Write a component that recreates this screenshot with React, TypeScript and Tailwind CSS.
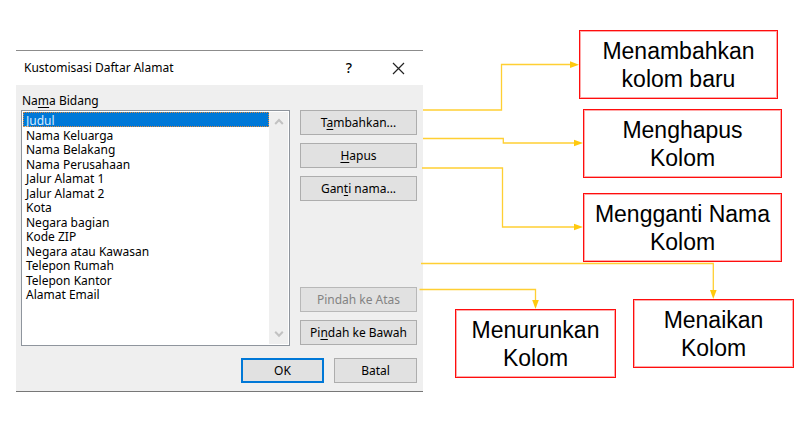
import React from "react";

const FIELDS = [
  "Judul",
  "Nama Keluarga",
  "Nama Belakang",
  "Nama Perusahaan",
  "Jalur Alamat 1",
  "Jalur Alamat 2",
  "Kota",
  "Negara bagian",
  "Kode ZIP",
  "Negara atau Kawasan",
  "Telepon Rumah",
  "Telepon Kantor",
  "Alamat Email",
];

const NOTES = [
  { lines: ["Menambahkan", "kolom baru"], place: "left-[579px] top-[30px] w-[199px]" },
  { lines: ["Menghapus", "Kolom"], place: "left-[583px] top-[109px] w-[199px]" },
  { lines: ["Mengganti Nama", "Kolom"], place: "left-[583px] top-[193px] w-[199px]" },
  { lines: ["Menurunkan", "Kolom"], place: "left-[455px] top-[309px] w-[161px]" },
  { lines: ["Menaikan", "Kolom"], place: "left-[633px] top-[299px] w-[161px]" },
];

function DialogButton({
  children,
  primary = false,
  disabled = false,
  width = "w-full",
}: {
  children: React.ReactNode;
  primary?: boolean;
  disabled?: boolean;
  width?: string;
}) {
  const frame = primary
    ? "border-2 border-[#0078d7]"
    : "border border-[#adadad] disabled:border-[#b8b8b8]";
  return (
    <button
      type="button"
      disabled={disabled}
      className={`flex h-[25px] items-center justify-center whitespace-nowrap bg-[#e1e1e1] text-black disabled:text-[#838383] ${frame} ${width}`}
    >
      <span>{children}</span>
    </button>
  );
}

function Key({ children }: { children: string }) {
  return <span className="underline underline-offset-2">{children}</span>;
}

function Chevron({ down = false }: { down?: boolean }) {
  return (
    <svg width="10" height="8" viewBox="0 0 10 8" fill="none" stroke="#c2c2c2" strokeWidth="2" aria-hidden="true">
      <path d={down ? "M1.2 1.7 5 5.7 8.8 1.7" : "M1.2 6 5 2 8.8 6"} />
    </svg>
  );
}

function Dialog() {
  return (
    <section
      aria-label="Kustomisasi Daftar Alamat"
      className="w-[407px] border-t border-b border-t-[#8c8c8c] border-b-[#777777] bg-[#efefef] font-['Noto_Sans','Open_Sans',sans-serif] text-[12px] leading-4 text-black"
    >
      <header className="flex h-[34px] items-center bg-white pr-[18px] pl-2">
        <h1 className="flex-1">Kustomisasi Daftar Alamat</h1>
        <button type="button" aria-label="Bantuan" className="mr-10 text-[14px] font-medium">
          ?
        </button>
        <button type="button" aria-label="Tutup">
          <svg width="13" height="13" viewBox="0 0 13 13" stroke="#222222" strokeWidth="1.2" aria-hidden="true">
            <path d="M1 1 12 12M12 1 1 12" />
          </svg>
        </button>
      </header>
      <div className="pt-2 pr-1.5 pb-2 pl-[5px]">
        <label htmlFor="fields" className="block h-[17px] pl-px leading-4">
          Na<Key>m</Key>a Bidang
        </label>
        <div className="flex justify-between">
          <div className="flex h-[236px] w-[269px] border border-[#8f959d] bg-white p-px">
            <select
              id="fields"
              size={13}
              defaultValue="Judul"
              className="h-full min-w-0 flex-1 overflow-hidden border-0 bg-white p-0 outline-none"
            >
              {FIELDS.map((field) => (
                <option
                  key={field}
                  value={field}
                  className="min-h-0 px-[3px] py-0 leading-[14px] odd:h-[15px] even:h-[14px] checked:bg-linear-to-r checked:from-[#0078d7] checked:to-[#0078d7] checked:outline checked:outline-dotted checked:-outline-offset-1 checked:outline-[#e08a3c] checked:[-webkit-text-fill-color:#d9ecff]"
                >
                  {field}
                </option>
              ))}
            </select>
            <div className="flex w-[19px] flex-col items-center justify-between bg-[#efefef] py-[6px]">
              <Chevron />
              <Chevron down />
            </div>
          </div>
          <div className="flex w-[117px] flex-col justify-between pb-px">
            <div className="flex flex-col gap-2">
              <DialogButton>
                T<Key>a</Key>mbahkan...
              </DialogButton>
              <DialogButton>
                <Key>H</Key>apus
              </DialogButton>
              <DialogButton>
                Gan<Key>t</Key>i nama...
              </DialogButton>
            </div>
            <div className="flex flex-col gap-2">
              <DialogButton disabled>Pindah ke Atas</DialogButton>
              <DialogButton>
                Pi<Key>n</Key>dah ke Bawah
              </DialogButton>
            </div>
          </div>
        </div>
        <footer className="flex justify-end gap-2.5 pt-3">
          <DialogButton primary width="w-[83px]">
            OK
          </DialogButton>
          <DialogButton width="w-[83px]">Batal</DialogButton>
        </footer>
      </div>
    </section>
  );
}

function Connectors() {
  return (
    <svg className="pointer-events-none absolute top-0 left-0" width="802" height="435" viewBox="0 0 802 435" aria-hidden="true">
      <g fill="none" stroke="#ffcf33" strokeWidth="1.3">
        <path d="M423 110H501.5V64.5H572" />
        <path d="M423 138.5H503.3V143H575" />
        <path d="M422 168H502.5V227H575" />
        <path d="M421 263.5H713.3V291" />
        <path d="M419.5 289.5H535.5V301" />
      </g>
      <g fill="#ffc90e">
        <path d="M570 61.3 579 64.7 570 68Z" />
        <path d="M574 139.7 583 143 574 146.3Z" />
        <path d="M574 223.7 583 227 574 230.3Z" />
        <path d="M710 290 713.3 299 716.6 290Z" />
        <path d="M532.2 300 535.5 309 538.8 300Z" />
      </g>
    </svg>
  );
}

export default function App() {
  return (
    <main className="relative min-h-screen bg-white pt-[50px] pb-10 pl-4">
      <Dialog />
      <Connectors />
      {NOTES.map((note) => (
        <p
          key={note.lines[0]}
          className={`absolute flex h-[69px] flex-col justify-center border border-[#ff0d0d] bg-white text-center font-['Liberation_Sans',Arial,sans-serif] text-[23px] leading-7 text-black inset-ring inset-ring-[#ffa8a8] ${note.place}`}
        >
          {note.lines.map((line) => (
            <span key={line}>{line}</span>
          ))}
        </p>
      ))}
    </main>
  );
}
